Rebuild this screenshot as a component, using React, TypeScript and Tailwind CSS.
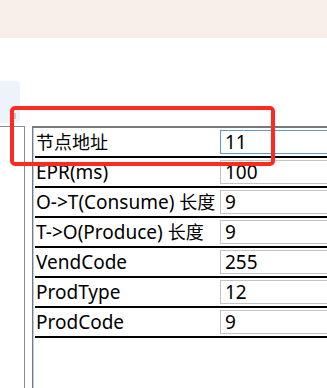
import React from "react";

const rows = [
  { label: "节点地址", value: "11", focus: true },
  { label: "EPR(ms)", value: "100" },
  { label: "O->T(Consume) 长度", value: "9" },
  { label: "T->O(Produce) 长度", value: "9" },
  { label: "VendCode", value: "255" },
  { label: "ProdType", value: "12" },
  { label: "ProdCode", value: "9" },
];

// CJK glyphs sit a bit narrower than the latin ones in the original
function Label({ text }: { text: string }) {
  const parts = text.split(/([\u4e00-\u9fff]+)/).filter(Boolean);
  return (
    <span>
      {parts.map((p, i) =>
        /[\u4e00-\u9fff]/.test(p) ? (
          <span key={i} className="text-[18px]">{p}</span>
        ) : (
          <span key={i}>{p}</span>
        )
      )}
    </span>
  );
}

export default function App() {
  return (
    <div
      className="relative h-[388px] w-[327px] overflow-hidden bg-white"
      style={{ fontFamily: '"Noto Sans", "Noto Sans CJK SC", sans-serif' }}
    >
      {/* top band */}
      <div className="h-[38px] bg-[#f8efeb]" />

      {/* side tab */}
      <div className="mt-[43px] flex h-[42px] w-[20px] items-end rounded-r-[4px] bg-[#edf3fb] pb-[4px] pl-[10px]">
        <svg width="6" height="6" viewBox="0 0 6 6" className="text-[#9a9a9a]">
          <path d="M0 1h6M0 3h6M0 5h6" stroke="currentColor" strokeWidth="1" />
        </svg>
      </div>

      <div className="mt-[3px] flex h-[262px]">
        {/* left pane edge */}
        <div className="w-[25px] shrink-0 border-t border-r border-[#8c8c8c]" />

        {/* property grid */}
        <div className="ml-[7px] flex-1 border-t-2 border-l border-[#7a7a7a]">
          <div className="h-full border-l border-[#b8cde6] pl-[1px]">
            {rows.map((r) => (
              <div key={r.label} className="flex h-[30px] items-stretch border-b-2 border-black">
                <div className="flex w-[185px] shrink-0 items-center whitespace-nowrap pl-[1px] text-[19px] leading-none text-black">
                  <Label text={r.label} />
                </div>
                <div
                  className={
                    r.focus
                      ? "my-[2px] mr-[-20px] flex flex-1 items-center border border-[#5b9bd5] pl-[4px] text-[19px] leading-none text-black"
                      : "my-[2px] mr-[-20px] flex flex-1 items-center border border-[#c4c4c4] pl-[4px] text-[19px] leading-none text-black"
                  }
                >
                  {r.value}
                </div>
              </div>
            ))}
          </div>
        </div>
      </div>

      {/* highlight annotation */}
      <div className="absolute left-[10px] top-[106px] h-[60px] w-[265px] rounded-[5px] border-[4px] border-[#ff2a1f]" />
    </div>
  );
}
